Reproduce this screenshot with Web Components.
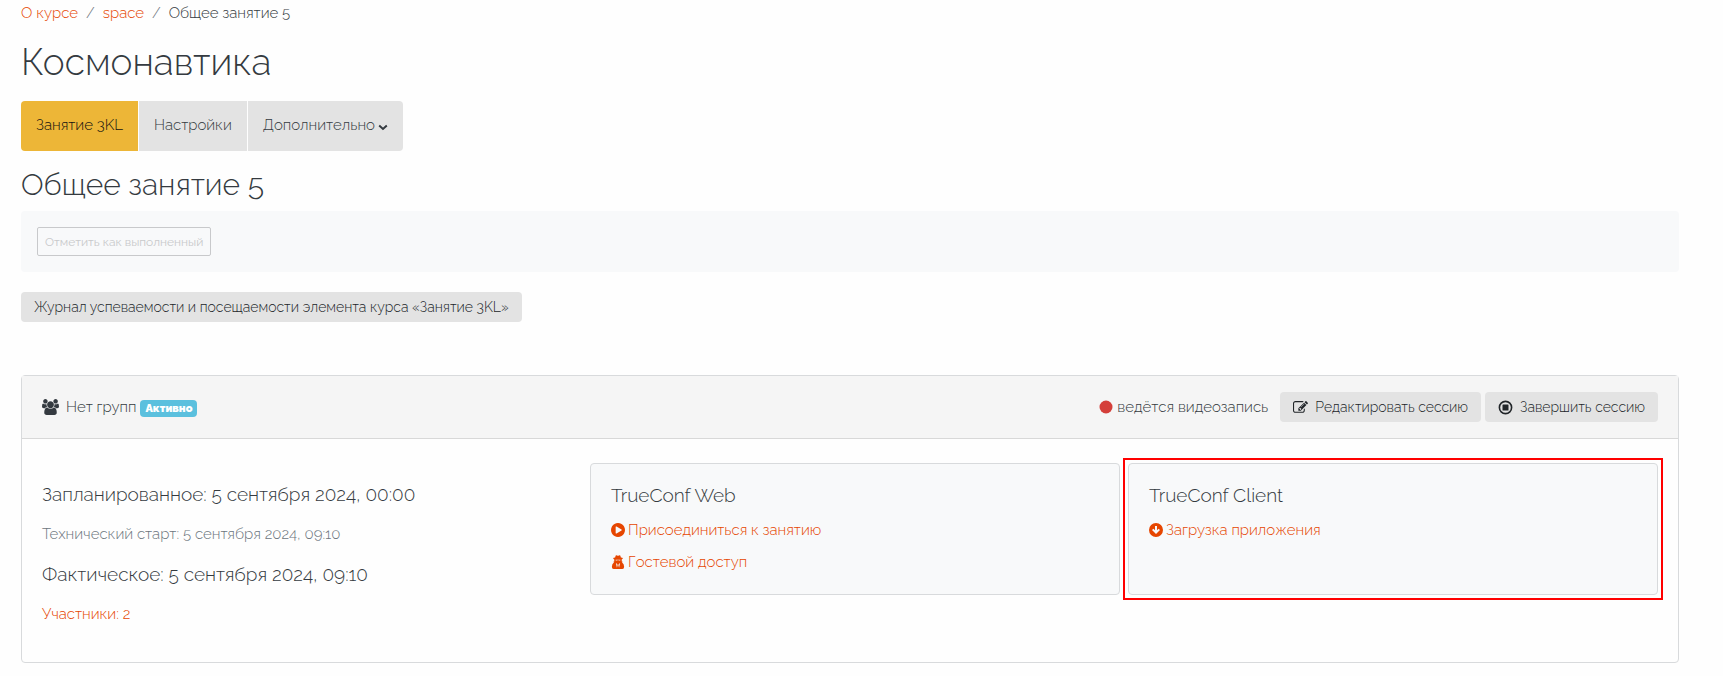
<!DOCTYPE html>
<html lang="ru">
<head>
<meta charset="utf-8">
<meta name="viewport" content="width=device-width, initial-scale=1">
<title>Космонавтика</title>
<style>
    body {
        margin: 0;
        background: #fefefe;
        color: #343a40;
        font: 300 15px/24px Raleway, Lato, "Open Sans", sans-serif;
    }
</style>
</head>
<body>
<course-page></course-page>

<script>
// Icons, each with its own view box
const icons = {
    users: ['-64 0 1920 1792', '<path d="M529 896q-162 5-265 128h-134q-82 0-138-40.5t-56-118.5q0-353 124-353 6 0 43.5 21t97.5 42.5 119 21.5q67 0 133-23-5 37-5 66 0 139 81 256zm1071 637q0 120-73 189.5t-194 69.5h-874q-121 0-194-69.5t-73-189.5q0-53 3.5-103.5t14-109 26.5-108.5 43-97.5 62-81 85.5-53.5 111.5-20q10 0 43 21.5t73 48 107 48 135 21.5 135-21.5 107-48 73-48 43-21.5q61 0 111.5 20t85.5 53.5 62 81 43 97.5 26.5 108.5 14 109 3.5 103.5zm-1024-1277q0 106-75 181t-181 75-181-75-75-181 75-181 181-75 181 75 75 181zm704 384q0 159-112.5 271.5t-271.5 112.5-271.5-112.5-112.5-271.5 112.5-271.5 271.5-112.5 271.5 112.5 112.5 271.5zm576 225q0 78-56 118.5t-138 40.5h-134q-103-123-265-128 81-117 81-256 0-29-5-66 66 23 133 23 59 0 119-21.5t97.5-42.5 43.5-21q124 0 124 353zm-128-609q0 106-75 181t-181 75-181-75-75-181 75-181 181-75 181 75 75 181z"/>'],
    edit: ['0 0 1792 1792', '<path d="M888 1184l116-116-152-152-116 116v56h96v96h56zm440-720q-16-16-33 1l-350 350q-17 17-1 33t33-1l350-350q17-17 1-33zm80 594v190q0 119-84.5 203.5t-203.5 84.5h-832q-119 0-203.5-84.5t-84.5-203.5v-832q0-119 84.5-203.5t203.5-84.5h832q63 0 117 25 15 7 18 23 3 17-9 29l-49 49q-14 14-32 8-23-6-45-6h-832q-66 0-113 47t-47 113v832q0 66 47 113t113 47h832q66 0 113-47t47-113v-126q0-13 9-22l64-64q15-15 35-7t20 29zm-96-738l288 288-672 672h-288v-288zm444 132l-92 92-288-288 92-92q28-28 68-28t68 28l152 152q28 28 28 68t-28 68z"/>'],
    stop: ['0 0 14 14', '<circle cx="7" cy="7" r="5.700" fill="none" stroke="currentColor" stroke-width="1.500"/><rect x="4.200" y="4.200" width="5.600" height="5.600" rx=".5"/>'],
    play: ['128 128 1536 1536', '<path d="M896 128q209 0 385.5 103t279.5 279.5 103 385.5-103 385.5-279.5 279.5-385.5 103-385.5-103-279.5-279.5-103-385.5 103-385.5 279.5-279.5 385.5-103zm384 823q32-18 32-55t-32-55l-544-320q-31-19-64-1-32 19-32 56v640q0 37 32 56 16 8 32 8 17 0 32-9z"/>'],
    down: ['0 0 14 14', '<path fill-rule="evenodd" d="M7 0a7 7 0 1 1 0 14a7 7 0 0 1 0-14zM6 3v4.300L4.400 5.700 3 7.100l4 4 4-4-1.400-1.400L8 7.300V3z"/>'],
    guest: ['0 0 14 16', '<path fill-rule="evenodd" d="M4.400 .7Q5.100 0 6 .5q1 .5 2 0 .9-.5 1.600 .2l.7 2.200q2.200.3 2.200 1t-1.200.9v2.600h.9l-.5 1.200Q14 10 14 13.500 14 16 12 16H2q-2 0-2-2.500 0-3.500 2.300-4.900L1.800 7.400h.9V4.800Q1.500 4.600 1.500 3.900t2.200-1zM4.200 5.300l.3 1h1.700l.5-.6h.6l.5.6h1.700l.3-1zM4.600 9.200l1.200 5.300.8-3-.6-1.300zM9.400 9.200L8 10.200l-.6 1.300.8 3z"/>'],
    chevron: ['0 0 10 7', '<path d="M1.200 1.500L5 5l3.800-3.500" fill="none" stroke="currentColor" stroke-width="2"/>'],
    record: ['0 0 14 14', '<circle cx="7" cy="7" r="6.500"/>']
};

class AppIcon extends HTMLElement {
    connectedCallback() {
        const [box, shape] = icons[this.getAttribute('name')];
        this.attachShadow({ mode: 'open' }).innerHTML = `
            <style>
                :host { display: inline-flex; flex: none; width: 14px; height: 14px; }
                svg { width: 100%; height: 100%; fill: currentColor; }
            </style>
            <svg viewBox="${box}" aria-hidden="true">${shape}</svg>
        `;
    }
}
customElements.define('app-icon', AppIcon);

class BreadCrumbs extends HTMLElement {
    connectedCallback() {
        this.attachShadow({ mode: 'open' }).innerHTML = `
            <style>
                :host { display: block; }
                ol { display: flex; margin: 0; padding: 0; list-style: none; }
                li + li::before { content: "/"; padding: 0 8px; color: #6c757d; }
                a { color: #e64600; text-decoration: none; }
            </style>
            <nav aria-label="Навигация">
                <ol>
                    <li><a href="#course">О курсе</a></li>
                    <li><a href="#space">space</a></li>
                    <li>Общее занятие 5</li>
                </ol>
            </nav>
        `;
    }
}
customElements.define('bread-crumbs', BreadCrumbs);

class CourseTabs extends HTMLElement {
    connectedCallback() {
        this.attachShadow({ mode: 'open' }).innerHTML = `
            <style>
                :host { display: block; }
                nav { display: flex; width: fit-content; gap: 1px; border-radius: 4px; overflow: hidden; }
                a, button {
                    display: flex;
                    align-items: center;
                    gap: 3px;
                    box-sizing: border-box;
                    height: 50px;
                    padding: 0 15px 2px;
                    border: 0;
                    background: #e3e3e3;
                    color: #343a40;
                    font: inherit;
                    text-decoration: none;
                }
                a.active { background: #edb637; color: #111; }
                app-icon { width: 10px; height: 7px; margin-top: 4px; }
            </style>
            <nav>
                <a class="active" href="#lesson">Занятие 3KL</a>
                <a href="#settings">Настройки</a>
                <button type="button">Дополнительно <app-icon name="chevron"></app-icon></button>
            </nav>
        `;
    }
}
customElements.define('course-tabs', CourseTabs);

class ActionButton extends HTMLElement {
    connectedCallback() {
        const icon = this.getAttribute('icon');
        this.attachShadow({ mode: 'open' }).innerHTML = `
            <style>
                :host { display: inline-block; }
                button {
                    display: flex;
                    align-items: center;
                    gap: 7px;
                    height: 30px;
                    padding: 0 13px;
                    border: 0;
                    border-radius: 4px;
                    background: #e3e3e3;
                    color: #212529;
                    font: inherit;
                    font-size: 14px;
                    white-space: nowrap;
                }
                app-icon { width: 15px; height: 15px; }
            </style>
            <button type="button">${icon ? `<app-icon name="${icon}"></app-icon>` : ''}<slot></slot></button>
        `;
    }
}
customElements.define('action-button', ActionButton);

class CompletionBar extends HTMLElement {
    connectedCallback() {
        this.attachShadow({ mode: 'open' }).innerHTML = `
            <style>
                :host { display: block; padding: 16px; border-radius: 4px; background: #f8f9fa; }
                button {
                    display: block;
                    height: 29px;
                    padding: 0 7px;
                    border: 1px solid #c8c9cb;
                    border-radius: 2px;
                    background: none;
                    color: #c8c9cb;
                    font: inherit;
                    font-weight: 400;
                    font-size: 12px;
                }
            </style>
            <button type="button" disabled>Отметить как выполненный</button>
        `;
    }
}
customElements.define('completion-bar', CompletionBar);

class IconLink extends HTMLElement {
    connectedCallback() {
        this.attachShadow({ mode: 'open' }).innerHTML = `
            <style>
                :host { display: block; }
                a { display: flex; width: fit-content; align-items: center; gap: 3px; color: #e64600; text-decoration: none; }
            </style>
            <a href="${this.getAttribute('href')}"><app-icon name="${this.getAttribute('icon')}"></app-icon><slot></slot></a>
        `;
    }
}
customElements.define('icon-link', IconLink);

class ConnectCard extends HTMLElement {
    connectedCallback() {
        this.attachShadow({ mode: 'open' }).innerHTML = `
            <style>
                :host {
                    display: flex;
                    flex-direction: column;
                    gap: 8px;
                    box-sizing: border-box;
                    min-height: 132px;
                    padding: 20px;
                    border: 1px solid #d8dadc;
                    border-radius: 4px;
                    background: #f8f9fa;
                }
                h4 { margin: 0 0 4px; font-weight: inherit; font-size: 19px; line-height: 22px; }
            </style>
            <h4>${this.getAttribute('heading')}</h4>
            <slot></slot>
        `;
    }
}
customElements.define('connect-card', ConnectCard);

class SessionPanel extends HTMLElement {
    connectedCallback() {
        this.attachShadow({ mode: 'open' }).innerHTML = `
            <style>
                :host { display: block; border: 1px solid #d8dadc; border-radius: 4px; }
                header {
                    display: flex;
                    align-items: center;
                    justify-content: space-between;
                    padding: 16px 20px;
                    border-bottom: 1px solid #d8d8d8;
                    background: #f5f5f5;
                }
                .group, .actions { display: flex; align-items: center; gap: 4px; }
                .group app-icon { width: 17px; height: 16px; margin-right: 3px; }
                .badge {
                    margin-top: 2px;
                    padding: 0 5px;
                    border-radius: 4px;
                    background: #5bc0de;
                    color: #fff;
                    font-weight: 900;
                    font-size: 11px;
                    line-height: 17px;
                }
                .recording { display: flex; align-items: center; gap: 4px; margin-right: 8px; }
                .recording app-icon { color: #d43f3a; }
                .content {
                    display: grid;
                    grid-template-columns: 54fr 53fr 53fr;
                    gap: 8px;
                    align-items: start;
                    padding: 24px 20px 20px;
                }
                .times { padding-top: 19px; }
                .times p { margin: 0 0 16px; }
                .times .major { font-size: 19px; }
                .times .muted { color: #6c757d; }
                .times a { color: #e64600; text-decoration: none; }
                .marked { outline: 2px solid #f00; outline-offset: 3px; }
            </style>
            <header>
                <div class="group">
                    <app-icon name="users"></app-icon>
                    <span>Нет групп</span>
                    <span class="badge">Активно</span>
                </div>
                <div class="actions">
                    <span class="recording"><app-icon name="record"></app-icon>ведётся видеозапись</span>
                    <action-button icon="edit">Редактировать сессию</action-button>
                    <action-button icon="stop">Завершить сессию</action-button>
                </div>
            </header>
            <div class="content">
                <div class="times">
                    <p class="major">Запланированное: 5 сентября 2024, 00:00</p>
                    <p class="muted">Технический старт: 5 сентября 2024, 09:10</p>
                    <p class="major">Фактическое: 5 сентября 2024, 09:10</p>
                    <p><a href="#participants">Участники: 2</a></p>
                </div>
                <connect-card heading="TrueConf Web">
                    <icon-link icon="play" href="#join">Присоединиться к занятию</icon-link>
                    <icon-link icon="guest" href="#guest">Гостевой доступ</icon-link>
                </connect-card>
                <div class="marked">
                    <connect-card heading="TrueConf Client">
                        <icon-link icon="down" href="#download">Загрузка приложения</icon-link>
                    </connect-card>
                </div>
            </div>
        `;
    }
}
customElements.define('session-panel', SessionPanel);

class CoursePage extends HTMLElement {
    connectedCallback() {
        this.attachShadow({ mode: 'open' }).innerHTML = `
            <style>
                :host { display: block; padding: 1px 44px 12px 21px; }
                h1, h2 { margin: 0; font-weight: inherit; }
                h1 { margin: 13px 0 15px; font-size: 37px; line-height: 48px; }
                h2 { margin: 14px 0 6px; font-size: 30px; line-height: 40px; }
                .journal { display: block; margin: 20px 0 53px; }
            </style>
            <bread-crumbs></bread-crumbs>
            <h1>Космонавтика</h1>
            <course-tabs></course-tabs>
            <h2>Общее занятие 5</h2>
            <completion-bar></completion-bar>
            <action-button class="journal">Журнал успеваемости и посещаемости элемента курса «Занятие 3KL»</action-button>
            <session-panel></session-panel>
        `;
    }
}
customElements.define('course-page', CoursePage);
</script>
</body>
</html>
